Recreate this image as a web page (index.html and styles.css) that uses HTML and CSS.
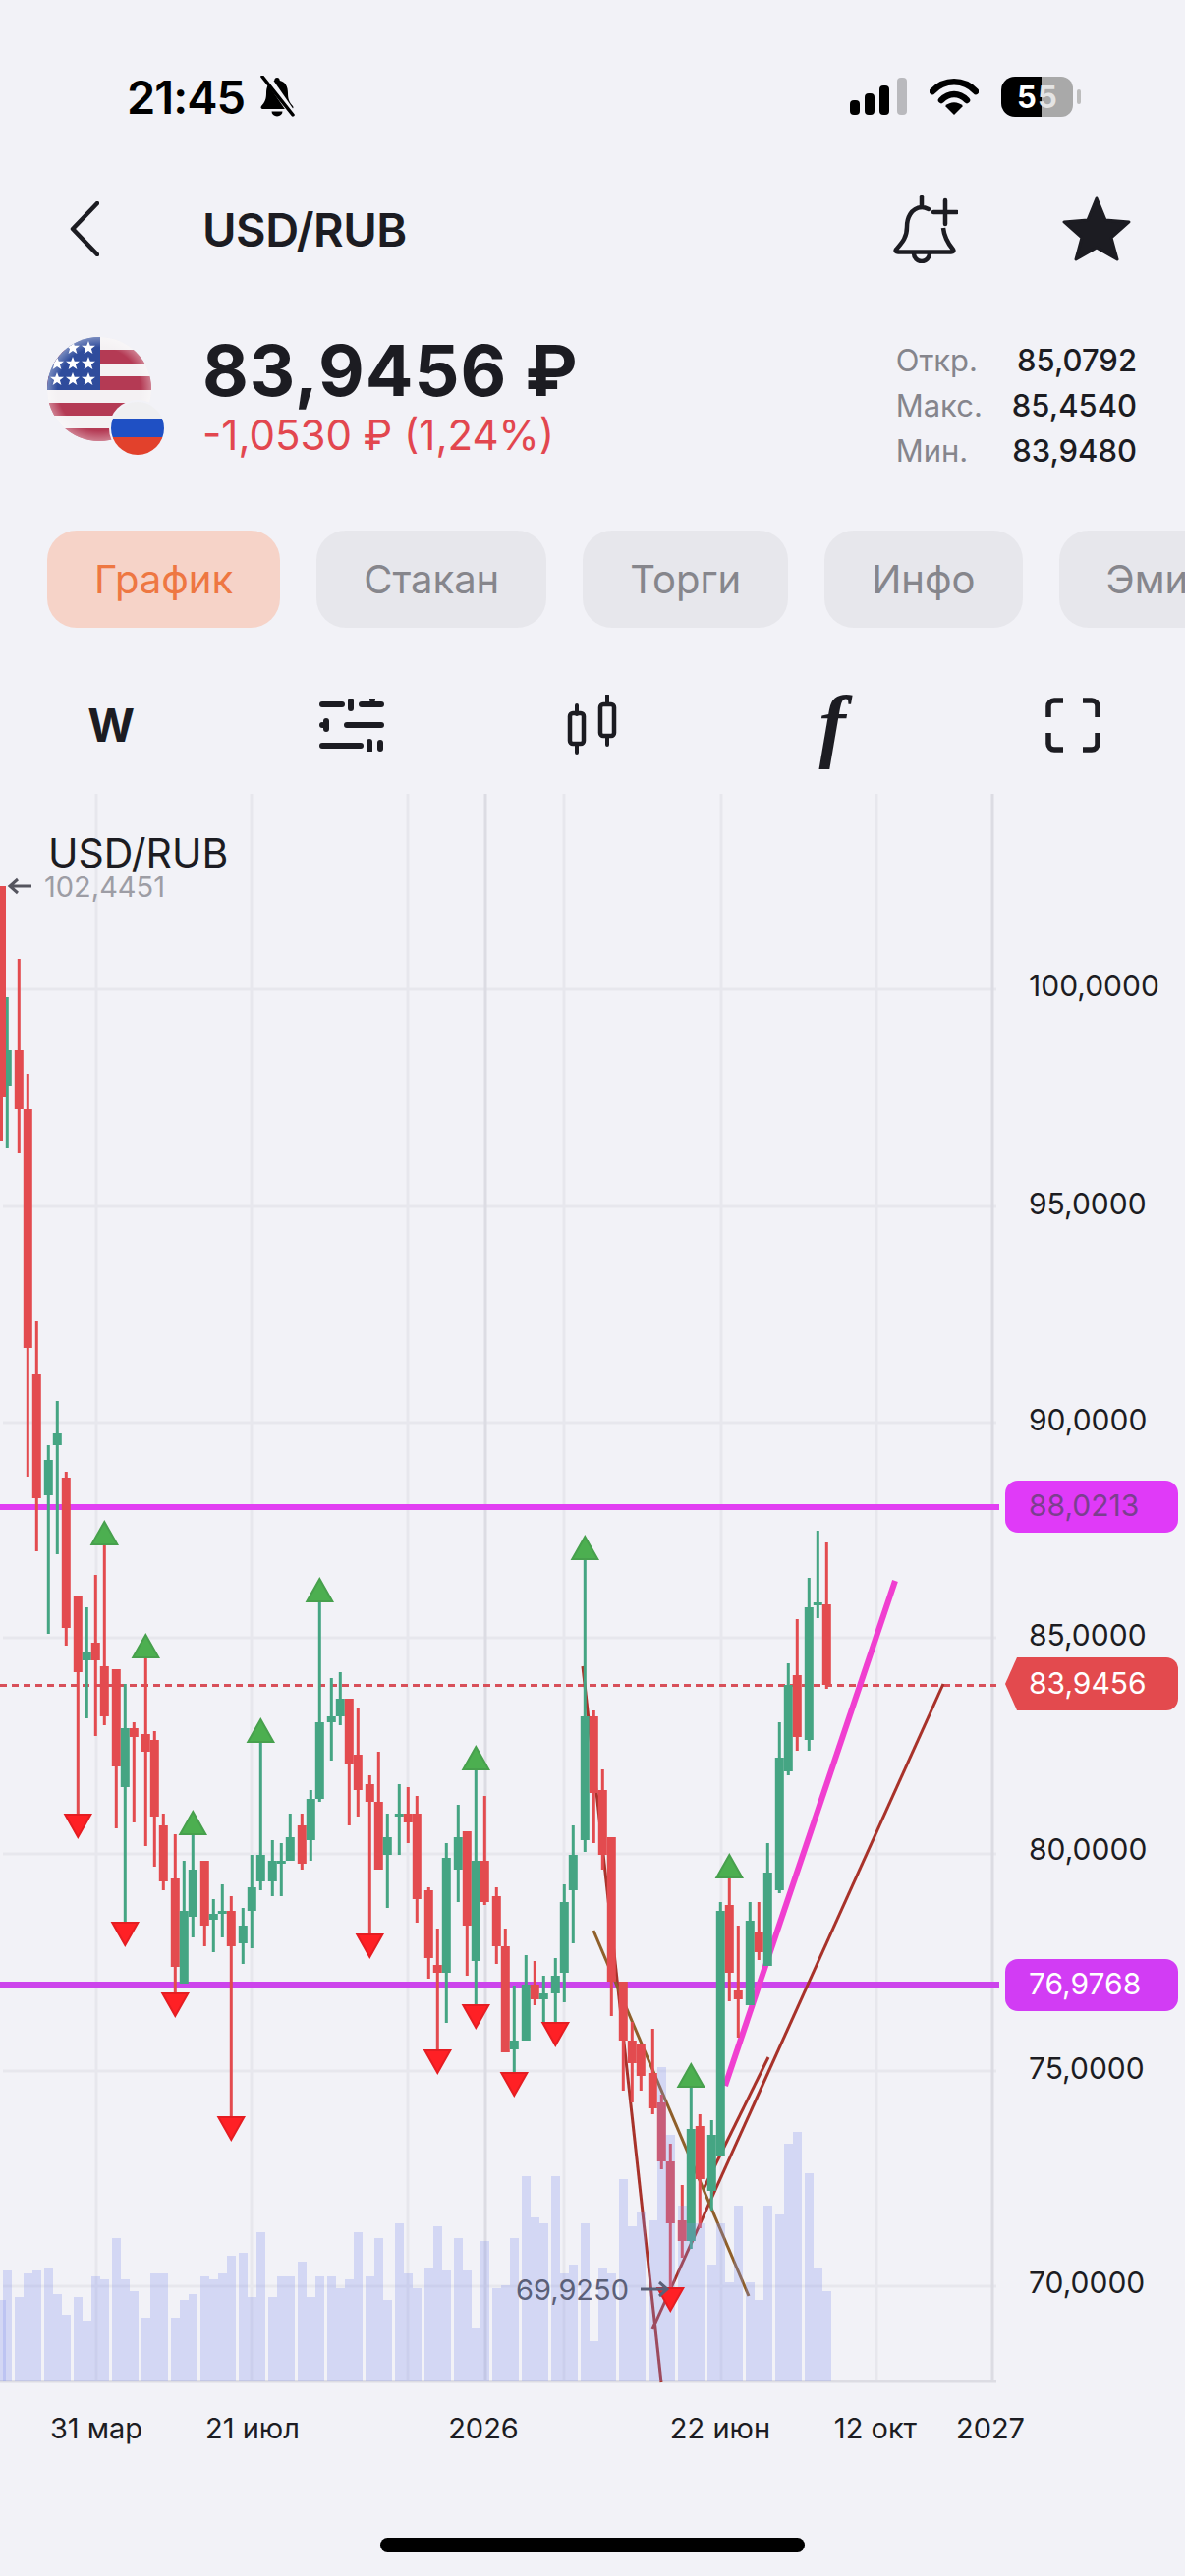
FILE: index.html
```html
<!DOCTYPE html>
<html lang="ru">

<head>
    <meta charset="UTF-8">
    <title>USD/RUB</title>
    <link rel="stylesheet" href="styles.css">
</head>

<body>
    <div class="screen">
        <div class="status-bar">
            <div class="status-left">
                <span class="time">21:45</span>
                <svg class="bell-off" viewBox="0 0 38 42" width="38" height="42">
                    <path d="M19 2c-1.800 0-2.600 1.300-2.800 3C10 6.500 8 11.500 8 18c0 6-1.500 9-5 13-1 1.200-.5 3 1.500 3h29c2 0 2.500-1.800 1.500-3-3.500-4-5-7-5-13 0-6.500-2-11.500-8.200-13-.2-1.700-1-3-2.800-3z" fill="#000"/>
                    <path d="M13.500 36.500a5.500 5 0 0 0 11 0z" fill="#000"/>
                    <path d="M7 -1 36 41" stroke="#f2f2f7" stroke-width="7"/>
                    <path d="M4 1 35 40" stroke="#000" stroke-width="3.500" stroke-linecap="round"/>
                </svg>
            </div>
            <div class="status-right">
                <svg viewBox="0 0 58 38" width="58" height="38">
                    <rect x="0" y="23" width="10" height="15" rx="4" fill="#000"/>
                    <rect x="15" y="16" width="10" height="22" rx="4" fill="#000"/>
                    <rect x="30" y="8" width="10" height="30" rx="4" fill="#000"/>
                    <rect x="48" y="0" width="10" height="38" rx="4" fill="#b9b9bd"/>
                </svg>
                <svg viewBox="0 0 50 38" width="50" height="38">
                    <path d="M3 14C15 1 35 1 47 14" fill="none" stroke="#000" stroke-width="6.500" stroke-linecap="round"/>
                    <path d="M12 23c8-8 18-8 26 0" fill="none" stroke="#000" stroke-width="6.500" stroke-linecap="round"/>
                    <path d="M25 38l-9-9c5-5 13-5 18 0z" fill="#000"/>
                </svg>
                <svg class="battery" viewBox="0 0 81 41" width="81" height="41">
                    <rect x="20" y="0" width="53" height="41" rx="12" fill="#a9a9a9"/>
                    <path d="M14 0h27v41H14A14 14 0 0 1 0 27V14A14 14 0 0 1 14 0z" fill="#000"/>
                    <rect x="77" y="13" width="4" height="15" rx="2" fill="#bdbdbd"/>
                    <text class="battery-text" x="16" y="32">5</text>
                    <text class="battery-text battery-text-dim" x="37" y="32">5</text>
                </svg>
            </div>
        </div>

        <div class="header">
            <svg class="back" viewBox="0 0 30 56" width="30" height="56">
                <path d="M28 2 3 28l25 26" fill="none" stroke="#1c1c22" stroke-width="4.500" stroke-linecap="round" stroke-linejoin="round"/>
            </svg>
            <span class="title">USD/RUB</span>
            <svg class="bell-add" viewBox="0 0 66 70" width="66" height="70">
                <path d="M29 13C18 14 14 24 14 33c0 11-5 16-11 23-1 1.500 0 2.500 2 2.500h54c2 0 3-1 2-2.500-5-6-9-12-10-22" fill="none" stroke="#1c1c22" stroke-width="4.500" stroke-linejoin="round"/>
                <path d="M29 13V2M29 13c3 0 5 1 7 2" fill="none" stroke="#1c1c22" stroke-width="4.500" stroke-linecap="round"/>
                <path d="M53 6v24M41 18h24" fill="none" stroke="#1c1c22" stroke-width="4.500" stroke-linecap="round"/>
                <path d="M21 60a8 8 0 0 0 16 0" fill="none" stroke="#1c1c22" stroke-width="4.500"/>
            </svg>
            <svg class="star" viewBox="0 0 70 66" width="70" height="66">
                <path d="M35 2 44 24 68 26 50 42 56 64 35 52 14 64 20 42 2 26 26 24z" fill="#1c1c22" stroke="#1c1c22" stroke-width="3" stroke-linejoin="round"/>
            </svg>
        </div>

        <div class="quote">
            <svg class="flags" viewBox="0 0 120 120" width="120" height="120">
                <defs>
                    <clipPath id="usClip"><circle cx="53" cy="53" r="53"/></clipPath>
                    <clipPath id="ruClip"><circle cx="92" cy="93" r="27"/></clipPath>
                    <radialGradient id="gloss" cx="50%" cy="50%" r="50%">
                        <stop offset="80%" stop-color="#fff" stop-opacity="0"/>
                        <stop offset="100%" stop-color="#fff" stop-opacity=".35"/>
                    </radialGradient>
                    <polygon id="flagStar" points="0,-7 1.800,-2.200 7,-2.200 2.900,1 4.400,6 0,3 -4.400,6 -2.900,1 -7,-2.200 -1.800,-2.200"/>
                </defs>
                <g clip-path="url(#usClip)">
                    <rect width="106" height="106" fill="#f4f1f3"/>
                    <rect y="13" width="106" height="14" fill="#b43a54"/>
                    <rect y="40" width="106" height="14" fill="#b43a54"/>
                    <rect y="67" width="106" height="13" fill="#b43a54"/>
                    <rect y="93" width="106" height="13" fill="#b43a54"/>
                    <rect width="54" height="54" fill="#2f4c9c"/>
                    <g fill="#fff">
                        <use href="#flagStar" x="10" y="27"/>
                        <use href="#flagStar" x="26" y="11"/>
                        <use href="#flagStar" x="42" y="11"/>
                        <use href="#flagStar" x="26" y="27"/>
                        <use href="#flagStar" x="42" y="27"/>
                        <use href="#flagStar" x="10" y="43"/>
                        <use href="#flagStar" x="26" y="43"/>
                        <use href="#flagStar" x="42" y="43"/>
                    </g>
                    <circle cx="53" cy="53" r="53" fill="url(#gloss)"/>
                </g>
                <circle cx="92" cy="93" r="29" fill="#f2f2f7"/>
                <g clip-path="url(#ruClip)">
                    <rect x="65" y="66" width="54" height="54" fill="#efeff1"/>
                    <rect x="65" y="83" width="54" height="19" fill="#1f50c4"/>
                    <rect x="65" y="102" width="54" height="18" fill="#e2412c"/>
                </g>
            </svg>
            <div class="price-block">
                <div class="price">83,9456 ₽</div>
                <div class="change">-1,0530 ₽ (1,24%)</div>
            </div>
            <div class="stats">
                <span class="stat-label">Откр.</span><span class="stat-value">85,0792</span>
                <span class="stat-label">Макс.</span><span class="stat-value">85,4540</span>
                <span class="stat-label">Мин.</span><span class="stat-value">83,9480</span>
            </div>
        </div>

        <div class="tabs">
            <div class="tab active">График</div>
            <div class="tab">Стакан</div>
            <div class="tab">Торги</div>
            <div class="tab">Инфо</div>
            <div class="tab">Эмитент</div>
        </div>

        <div class="toolbar">
            <div class="tool period">W</div>
            <div class="tool">
                <svg viewBox="0 0 66 54" width="66" height="54">
                    <path d="M3 6h20M43 6h20M32 2v8M3 27h0M28 27h35M7 23v8M54 1v0M3 48h39M51 44v9M62 45v6" fill="none" stroke="#1c1c22" stroke-width="6" stroke-linecap="round"/>
                </svg>
            </div>
            <div class="tool">
                <svg viewBox="0 0 54 62" width="54" height="62">
                    <path d="M11 11v9M11 50v9M42 1v9M42 42v9" fill="none" stroke="#1c1c22" stroke-width="4" stroke-linecap="round"/>
                    <rect x="4" y="19" width="14" height="31" rx="3" fill="none" stroke="#1c1c22" stroke-width="4.500"/>
                    <rect x="35" y="10" width="14" height="32" rx="3" fill="none" stroke="#1c1c22" stroke-width="4.500"/>
                </svg>
            </div>
            <div class="tool formula">f</div>
            <div class="tool">
                <svg viewBox="0 0 56 56" width="56" height="56">
                    <path d="M3 20V9a6 6 0 0 1 6-6h9M38 3h9a6 6 0 0 1 6 6v11M53 36v11a6 6 0 0 1-6 6h-9M18 53H9a6 6 0 0 1-6-6V36" fill="none" stroke="#1c1c22" stroke-width="5.500"/>
                </svg>
            </div>
        </div>

        <svg class="chart" viewBox="0 808 1206 1720" width="1206" height="1720">
            <g id="gridLayer"></g>
            <line class="level level-top" x1="0" y1="1534" x2="1017" y2="1534"/>
            <line class="level level-bottom" x1="0" y1="2020" x2="1017" y2="2020"/>
            <line class="last-price" x1="0" y1="1715.500" x2="1014" y2="1715.500"/>
            <line class="trend trend-pink" x1="738" y1="2123" x2="911" y2="1609"/>
            <line class="trend trend-red" x1="664" y1="2371" x2="960" y2="1714"/>
            <line class="trend trend-red" x1="716" y1="2228" x2="782" y2="2094"/>
            <line class="trend trend-red" x1="593" y1="1696" x2="673" y2="2425"/>
            <line class="trend trend-brown" x1="604" y1="1965" x2="762" y2="2337"/>
            <g id="candleLayer"></g>
            <g id="volumeLayer"></g>
            <g id="arrowLayer"></g>

            <text class="chart-name" x="49" y="883">USD/RUB</text>
            <path class="note-arrow" d="M32 902H10M18 895l-8 7 8 7"/>
            <text class="note note-high" x="45" y="913">102,4451</text>
            <text class="note note-low" x="525" y="2341">69,9250</text>
            <path class="note-arrow note-arrow-low" d="M652 2330h26M671 2323l8 7-8 7"/>

            <text class="axis" x="1047" y="1014">100,0000</text>
            <text class="axis" x="1047" y="1236">95,0000</text>
            <text class="axis" x="1047" y="1456">90,0000</text>
            <text class="axis" x="1047" y="1675">85,0000</text>
            <text class="axis" x="1047" y="1893">80,0000</text>
            <text class="axis" x="1047" y="2116">75,0000</text>
            <text class="axis" x="1047" y="2334">70,0000</text>

            <rect class="pill pill-top" x="1023" y="1507" width="176" height="53" rx="13"/>
            <text class="axis pill-text-dim" x="1047" y="1543">88,0213</text>
            <path class="pill pill-last" d="M1035 1687h152a12 12 0 0 1 12 12v30a12 12 0 0 1-12 12h-152l-12-27z"/>
            <text class="axis pill-text" x="1047" y="1724">83,9456</text>
            <rect class="pill pill-bottom" x="1023" y="1994" width="176" height="53" rx="13"/>
            <text class="axis pill-text" x="1047" y="2030">76,9768</text>

            <text class="date" x="98" y="2482">31 мар</text>
            <text class="date" x="257" y="2482">21 июл</text>
            <text class="date" x="492" y="2482">2026</text>
            <text class="date" x="733" y="2482">22 июн</text>
            <text class="date" x="891" y="2482">12 окт</text>
            <text class="date" x="1008" y="2482">2027</text>
        </svg>

        <div class="home-bar"></div>
    </div>

    <script src="chart.js"></script>
</body>

</html>
```

FILE: styles.css
```css
body {
    margin: 0;
    background: #f2f2f7;
    font-family: Inter, "Noto Sans", sans-serif;
    color: #1c1c22;
}

.screen {
    position: relative;
    width: 1206px;
    height: 2622px;
    overflow: hidden;
}

.status-bar {
    height: 196px;
    display: flex;
    justify-content: space-between;
    align-items: flex-start;
    padding: 70px 106px 0 129px;
    box-sizing: border-box;
}

.status-left,
.status-right {
    display: flex;
    align-items: center;
}

.status-left {
    gap: 14px;
    height: 56px;
}

.status-right {
    gap: 23px;
    height: 56px;
}

.time {
    font-size: 47px;
    font-weight: 600;
    color: #000;
    letter-spacing: -1px;
}

.battery-text {
    font-size: 31px;
    font-weight: 700;
    fill: #fff;
}

.battery-text-dim {
    fill: #e4e4e4;
}

.header {
    height: 74px;
    display: flex;
    align-items: center;
    padding: 0 55px 0 71px;
}

.title {
    margin-left: 105px;
    font-size: 47px;
    font-weight: 600;
    letter-spacing: -0.5px;
}

.bell-add {
    margin-left: auto;
}

.star {
    margin-left: 106px;
}

.quote {
    margin-top: 73px;
    height: 120px;
    display: flex;
    padding: 0 49px 0 48px;
}

.price-block {
    margin-left: 38px;
}

.price {
    font-size: 72px;
    font-weight: 700;
    line-height: 72px;
    margin-top: -2px;
    letter-spacing: 1px;
}

.change {
    font-size: 42px;
    font-weight: 400;
    line-height: 50px;
    margin-top: 5px;
    color: #e2474f;
}

.stats {
    margin-left: auto;
    display: grid;
    grid-template-columns: auto auto;
    grid-auto-rows: 46px;
    column-gap: 30px;
    align-items: center;
    font-size: 31px;
}

.stat-label {
    color: #85858c;
}

.stat-value {
    font-weight: 500;
    text-align: right;
}

.tabs {
    margin-top: 77px;
    display: flex;
    gap: 37px;
    padding-left: 48px;
    overflow: hidden;
}

.tab {
    flex: none;
    height: 99px;
    line-height: 99px;
    padding: 0 48px;
    border-radius: 30px;
    background: #e7e7ec;
    color: #86868c;
    font-size: 40px;
}

.tab.active {
    background: #f6d3c8;
    color: #ee7742;
}

.toolbar {
    margin-top: 61px;
    height: 76px;
    display: flex;
    justify-content: space-between;
    padding: 0 81px 0 80px;
}

.tool {
    width: 66px;
    height: 76px;
    display: flex;
    align-items: center;
    justify-content: center;
}

.period {
    font-size: 46px;
    font-weight: 700;
}

.formula {
    font-family: "Liberation Serif", serif;
    font-style: italic;
    font-weight: 700;
    font-size: 82px;
}

.chart {
    display: block;
    margin-top: 32px;
}

.grid-line {
    stroke: #e7e7ed;
    stroke-width: 3;
}

.grid-line-year {
    stroke: #dcdce3;
}

.level {
    stroke-width: 6;
}

.level-top {
    stroke: #e23ff3;
}

.level-bottom {
    stroke: #cc44ec;
}

.last-price {
    stroke: #d8505a;
    stroke-width: 3;
    stroke-dasharray: 7 5;
}

.trend {
    stroke-width: 3;
}

.trend-pink {
    stroke: #f03fd0;
    stroke-width: 6;
}

.trend-red {
    stroke: #a8322a;
}

.trend-brown {
    stroke: #8f5f2a;
}

.wick-up,
.body-up {
    fill: #45a583;
}

.wick-down,
.body-down {
    fill: #e34b4f;
}

.volume-bar {
    fill: rgba(130, 145, 235, 0.27);
}

.arrow-up {
    fill: #4caf50;
    stroke: #47a04d;
    stroke-width: 2;
}

.arrow-down {
    fill: #ff2025;
    stroke: #e51d22;
    stroke-width: 2;
}

.chart-name {
    font-size: 41px;
    fill: #1c1c22;
}

.note {
    font-size: 29px;
}

.note-high {
    fill: #9d9da5;
}

.note-low {
    fill: #5b6078;
}

.note-arrow {
    fill: none;
    stroke: #55555f;
    stroke-width: 3;
}

.note-arrow-low {
    stroke: #5b6078;
}

.axis {
    font-size: 30px;
    fill: #1c1c22;
}

.date {
    font-size: 29px;
    fill: #1c1c22;
    text-anchor: middle;
}

.pill-top {
    fill: #e03af8;
}

.pill-last {
    fill: #e34a4e;
}

.pill-bottom {
    fill: #d23cf4;
}

.pill-text {
    fill: #fff;
}

.pill-text-dim {
    fill: #7b3f8f;
}

.home-bar {
    position: absolute;
    left: 387px;
    top: 2583px;
    width: 432px;
    height: 15px;
    border-radius: 8px;
    background: #000;
}
```

FILE: chart.js
```js
const SVG_NS = 'http://www.w3.org/2000/svg';

// x, wick top, body top, body bottom, wick bottom, direction, volume top
const candles = [
    [7.3, 1015, 1069, 1105, 1168, 'g', 2311],
    [1.5, 902, 902, 1117, 1161, 'r', 2341],
    [19.3, 976, 1069, 1129, 1174, 'r', 2338],
    [28.3, 1093, 1129, 1372, 1503, 'r', 2314],
    [37.3, 1345, 1399, 1525, 1579, 'r', 2311],
    [49.3, 1471, 1486, 1522, 1663, 'g', 2308],
    [58.3, 1426, 1459, 1471, 1582, 'g', 2335],
    [67.3, 1498, 1504, 1657, 1675, 'r', 2356],
    [79.3, 1624, 1624, 1702, 1847, 'r', 2338],
    [88.3, 1636, 1681, 1690, 1749, 'g', 2362],
    [97.3, 1603, 1672, 1690, 1767, 'r', 2317],
    [106.3, 1572, 1696, 1747, 1756, 'r', 2320],
    [118.3, 1699, 1699, 1798, 1861, 'r', 2278],
    [127.3, 1714, 1759, 1819, 1957, 'g', 2320],
    [136.3, 1753, 1759, 1768, 1855, 'r', 2332],
    [148.3, 1687, 1765, 1783, 1879, 'r', 2359],
    [157.3, 1762, 1771, 1849, 1900, 'r', 2314],
    [166.3, 1846, 1858, 1915, 1924, 'r', 2314],
    [178.3, 1867, 1912, 2002, 2029, 'r', 2359],
    [187.3, 1894, 1945, 2019, 2019, 'g', 2341],
    [196.3, 1867, 1903, 1951, 1972, 'g', 2335],
    [208.3, 1894, 1894, 1960, 1981, 'r', 2317],
    [217.3, 1933, 1948, 1954, 1987, 'g', 2320],
    [226.3, 1918, 1945, 1948, 1972, 'g', 2314],
    [235.3, 1930, 1945, 1981, 2155, 'r', 2296],
    [247.3, 1942, 1960, 1978, 1999, 'g', 2293],
    [256.3, 1888, 1921, 1945, 1983, 'g', 2338],
    [265.3, 1773, 1888, 1915, 1924, 'g', 2272],
    [277.3, 1873, 1894, 1915, 1930, 'g', 2338],
    [286.3, 1876, 1894, 1897, 1930, 'g', 2317],
    [295.3, 1846, 1870, 1894, 1894, 'g', 2317],
    [307.3, 1846, 1858, 1897, 1903, 'r', 2302],
    [316.3, 1822, 1831, 1873, 1894, 'g', 2338],
    [325.3, 1630, 1753, 1831, 1834, 'g', 2317],
    [337.3, 1708, 1747, 1753, 1792, 'g', 2317],
    [346.3, 1702, 1729, 1747, 1756, 'g', 2329],
    [355.3, 1729, 1729, 1795, 1858, 'r', 2320],
    [364.3, 1738, 1786, 1822, 1849, 'r', 2272],
    [376.3, 1807, 1816, 1834, 1969, 'r', 2317],
    [385.3, 1783, 1834, 1903, 1903, 'r', 2278],
    [394.3, 1846, 1870, 1888, 1942, 'g', 2341],
    [406.3, 1816, 1846, 1849, 1888, 'g', 2263],
    [415.3, 1819, 1846, 1855, 1876, 'r', 2314],
    [424.3, 1828, 1846, 1933, 1957, 'r', 2329],
    [436.3, 1921, 1924, 1993, 2014, 'r', 2308],
    [445.3, 1963, 2000, 2008, 2087, 'r', 2266],
    [454.3, 1876, 1891, 2008, 2059, 'g', 2311],
    [466.3, 1837, 1870, 1903, 1936, 'g', 2278],
    [475.3, 1864, 1864, 1960, 2011, 'r', 2311],
    [484.3, 1801, 1894, 1996, 2041, 'g', 2370],
    [493.3, 1828, 1894, 1936, 1939, 'r', 2281],
    [505.3, 1921, 1930, 1981, 1999, 'r', 2329],
    [514.3, 1963, 1981, 2089, 2089, 'r', 2326],
    [523.3, 2021, 2077, 2086, 2110, 'g', 2278],
    [535.3, 1990, 2020, 2077, 2077, 'g', 2215],
    [544.3, 1996, 2020, 2035, 2041, 'r', 2257],
    [553.3, 2011, 2029, 2035, 2059, 'g', 2263],
    [565.3, 1993, 2011, 2029, 2059, 'g', 2215],
    [574.3, 1918, 1936, 2008, 2038, 'g', 2314],
    [583.3, 1858, 1888, 1924, 1978, 'g', 2305],
    [595.3, 1587, 1747, 1873, 1885, 'g', 2263],
    [604.3, 1741, 1747, 1825, 1876, 'r', 2383],
    [613.3, 1801, 1822, 1888, 1903, 'r', 2308],
    [622.3, 1870, 1870, 2017, 2052, 'r', 2314],
    [634.3, 2017, 2017, 2077, 2128, 'r', 2218],
    [643.3, 2058, 2077, 2100, 2140, 'r', 2266],
    [652.3, 2080, 2080, 2113, 2128, 'r', 2251],
    [664.3, 2065, 2110, 2146, 2152, 'r', 2260],
    [673.3, 2132, 2140, 2200, 2208, 'r', 2104],
    [682.3, 2182, 2200, 2263, 2329, 'r', 2173],
    [694.3, 2224, 2260, 2281, 2298, 'r', 2245],
    [703.3, 2124, 2167, 2281, 2289, 'g', 2263],
    [712.3, 2152, 2164, 2218, 2268, 'r', 2263],
    [724.3, 2158, 2173, 2230, 2250, 'g', 2305],
    [733.3, 1936, 1945, 2194, 2194, 'g', 2263],
    [742.3, 1911, 1939, 2008, 2037, 'r', 2323],
    [751.3, 1960, 2026, 2035, 2074, 'r', 2245],
    [763.3, 1936, 1955, 2041, 2041, 'g', 2323],
    [772.3, 1936, 1966, 1987, 1995, 'r', 2341],
    [781.3, 1876, 1906, 2001, 2001, 'g', 2245],
    [793.3, 1753, 1789, 1924, 1927, 'g', 2254],
    [802.3, 1693, 1715, 1803, 1807, 'g', 2182],
    [811.3, 1648, 1705, 1768, 1782, 'r', 2170],
    [823.3, 1606, 1636, 1771, 1782, 'g', 2212],
    [832.3, 1558, 1631, 1634, 1647, 'g', 2308],
    [841.3, 1570, 1633, 1715, 1719, 'r', 2332]
];

const upArrows = [[106.3, 1572], [148.3, 1687], [196.3, 1867], [265.3, 1773], [325.3, 1630], [484.3, 1801], [595.3, 1587], [703.3, 2124], [742.3, 1911]];
const downArrows = [[79.3, 1847], [127.3, 1957], [178.3, 2029], [235.3, 2155], [376.3, 1969], [445.3, 2087], [484.3, 2041], [523.3, 2110], [565.3, 2059], [682.3, 2329]];

const priceLines = [1007, 1228, 1448, 1667, 1887, 2108, 2327];
const timeLines = [98, 256, 415, 494, 574, 734, 892, 1010];
const yearLines = [494, 1010];

const chartTop = 808;
const chartBottom = 2424;

function addShape(parent, tag, className, attrs) {
    const el = document.createElementNS(SVG_NS, tag);
    el.setAttribute('class', className);
    for (const name in attrs) {
        el.setAttribute(name, attrs[name]);
    }
    parent.appendChild(el);
}

function addBox(parent, className, x, width, top, bottom) {
    addShape(parent, 'rect', className, { x: x, y: top, width: width, height: bottom - top });
}

function drawGrid() {
    const layer = document.getElementById('gridLayer');
    priceLines.forEach(y => {
        addShape(layer, 'line', 'grid-line', { x1: 3, y1: y, x2: 1014, y2: y });
    });
    timeLines.forEach(x => {
        const cls = yearLines.includes(x) ? 'grid-line grid-line-year' : 'grid-line';
        addShape(layer, 'line', cls, { x1: x, y1: chartTop, x2: x, y2: chartBottom });
    });
    addShape(layer, 'line', 'grid-line grid-line-year', { x1: 0, y1: chartBottom, x2: 1014, y2: chartBottom });
}

function drawCandles() {
    const candleLayer = document.getElementById('candleLayer');
    const volumeLayer = document.getElementById('volumeLayer');
    candles.forEach(([x, wickTop, bodyTop, bodyBottom, wickBottom, dir, volumeTop]) => {
        const kind = dir === 'g' ? 'up' : 'down';
        addBox(candleLayer, 'wick-' + kind, x - 1.5, 3, wickTop, wickBottom);
        addBox(candleLayer, 'body-' + kind, x - 4.5, 9, bodyTop, bodyBottom);
    });
    candles.slice().sort((a, b) => a[0] - b[0]).forEach(c => {
        const left = Math.round((c[0] - 4.3) / 3) * 3;
        addBox(volumeLayer, 'volume-bar', left, 9, c[6], chartBottom);
    });
}

function drawArrows() {
    const layer = document.getElementById('arrowLayer');
    upArrows.forEach(([x, y]) => {
        addShape(layer, 'polygon', 'arrow-up', { points: `${x},${y - 23} ${x + 13},${y} ${x - 13},${y}` });
    });
    downArrows.forEach(([x, y]) => {
        addShape(layer, 'polygon', 'arrow-down', { points: `${x - 13},${y} ${x + 13},${y} ${x},${y + 23}` });
    });
}

drawGrid();
drawCandles();
drawArrows();
```
